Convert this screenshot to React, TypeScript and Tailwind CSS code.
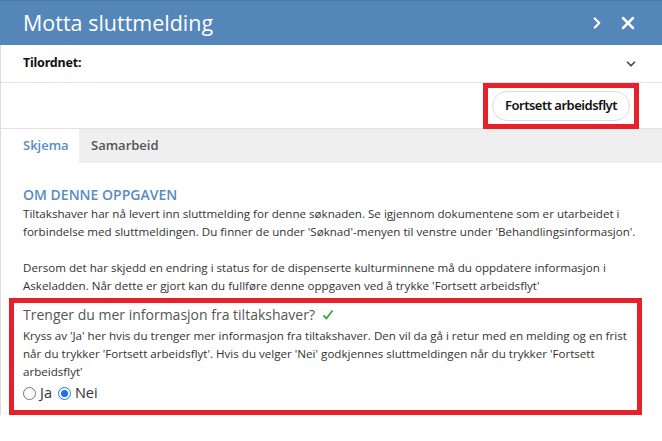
import { ChevronRight, ChevronDown, X } from "lucide-react";

const body = { fontFamily: '"Open Sans", "Liberation Sans", sans-serif' };
const ui = { fontFamily: '"Noto Sans", "Open Sans", sans-serif' };

function Radio({ checked, label }: { checked?: boolean; label: string }) {
  return (
    <label className="flex items-center gap-[4px]">
      <span
        className={`flex h-[13px] w-[13px] items-center justify-center rounded-full border ${
          checked ? "border-[#1a73e8]" : "border-[#767676]"
        } bg-white`}
      >
        {checked && <span className="h-[7px] w-[7px] rounded-full bg-[#1a73e8]" />}
      </span>
      <span className="text-[14.5px] text-[#333]">{label}</span>
    </label>
  );
}

export default function App() {
  return (
    <div className="h-[441px] w-[662px] overflow-hidden bg-white" style={body}>
      <header className="flex h-[45px] items-center justify-between border-t border-[#4a78a8] bg-[#5486ba] pl-[23px] pr-[24px]">
        <h1 className="text-[21.5px] leading-none text-white">Motta sluttmelding</h1>
        <div className="flex items-center gap-[12px] text-white">
          <ChevronRight size={18} strokeWidth={3} />
          <X size={20} strokeWidth={3} />
        </div>
      </header>

      <div className="border-l border-[#ddd]">
        <div className="flex h-[38px] items-center justify-between border-b border-[#e2e2e2] pl-[22px] pr-[24px]">
          <span className="text-[12.5px] font-bold tracking-[-0.2px] text-[#111]" style={ui}>
            Tilordnet:
          </span>
          <ChevronDown size={14} strokeWidth={3} className="text-[#4a4a4a]" />
        </div>

        <div className="flex h-[45px] items-center justify-end pr-[23px]">
          <div className="border-[5px] border-[#e8202a] px-[4px] py-[3px]">
            <button
              className="h-[30px] rounded-full border border-[#dcdcdc] px-[12px] text-[13px] font-semibold tracking-[-0.5px] text-[#111]"
              style={ui}
            >
              Fortsett arbeidsflyt
            </button>
          </div>
        </div>

        <div className="flex h-[35px] items-stretch border-t border-[#e2e2e2] bg-[#efefef] text-[13px] font-semibold">
          <div className="flex w-[78px] items-center bg-white pl-[22px] text-[#5b8bc3]">Skjema</div>
          <div className="flex items-center px-[12px] text-[#555]">Samarbeid</div>
        </div>

        <div className="pt-[22px]">
          <div className="pl-[22px]">
            <h2 className="text-[14px] font-semibold leading-[20px] text-[#5b8bc3]">OM DENNE OPPGAVEN</h2>
            <p className="whitespace-nowrap text-[11.6px] leading-[18px] text-[#333]">
              Tiltakshaver har nå levert inn sluttmelding for denne søknaden. Se igjennom dokumentene som er utarbeidet i
              <br />
              forbindelse med sluttmeldingen. Du finner de under 'Søknad'-menyen til venstre under 'Behandlingsinformasjon'.
            </p>
            <p className="mt-[18px] whitespace-nowrap text-[11.6px] leading-[18px] text-[#333]">
              Dersom det har skjedd en endring i status for de dispenserte kulturminnene må du oppdatere informasjon i
              <br />
              Askeladden. Når dette er gjort kan du fullføre denne oppgaven ved å trykke 'Fortsett arbeidsflyt'
            </p>
          </div>

          <div className="ml-[8px] mt-[3px] w-[633px] border-[5px] border-[#e8202a] pb-[5px] pl-[9px] pr-[10px] pt-[1px]">
            <div className="flex items-center gap-[7px] text-[14px] leading-[22px] text-[#555]">
              <span>Trenger du mer informasjon fra tiltakshaver?</span>
              <svg width="12" height="12" viewBox="0 0 12 12" className="text-[#3aa53a]">
                <path d="M1.5 6.5 L4.5 9.5 L10.5 1.5" fill="none" stroke="currentColor" strokeWidth="1.8" />
              </svg>
            </div>
            <p className="mt-[1px] whitespace-nowrap text-[11.6px] leading-[18px] text-[#333]">
              Kryss av 'Ja' her hvis du trenger mer informasjon fra tiltakshaver. Den vil da gå i retur med en melding og en frist
              <br />
              når du trykker 'Fortsett arbeidsflyt'. Hvis du velger 'Nei' godkjennes sluttmeldingen når du trykker 'Fortsett
              <br />
              arbeidsflyt'
            </p>
            <div className="flex h-[24px] items-center gap-[6px]">
              <Radio label="Ja" />
              <Radio checked label="Nei" />
            </div>
          </div>
        </div>
      </div>
    </div>
  );
}
